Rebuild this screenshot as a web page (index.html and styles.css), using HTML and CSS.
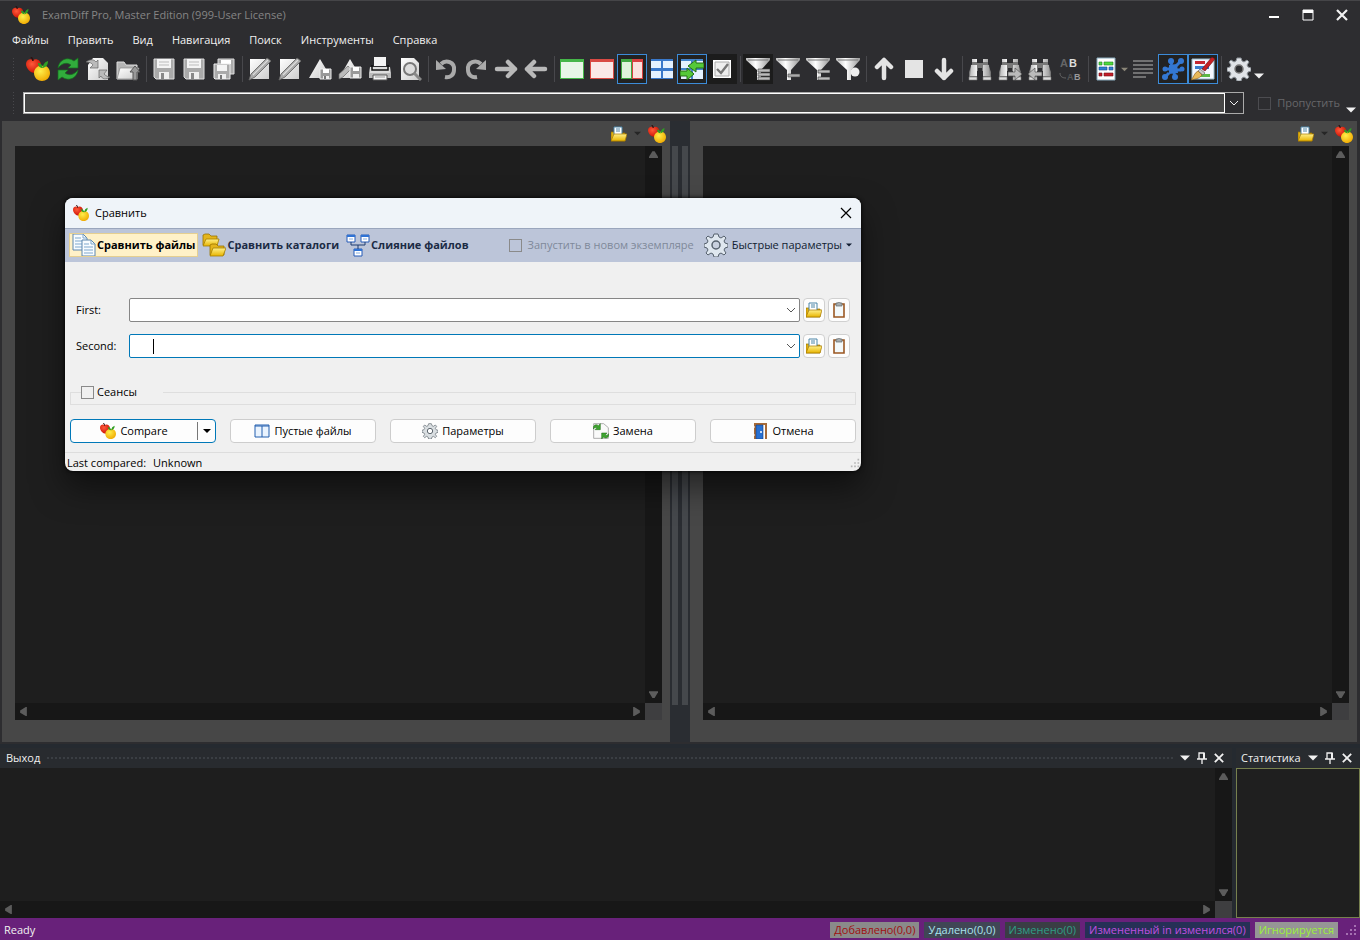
FILE: index.html
```
<!DOCTYPE html>
<html lang="ru">
  <head>
    <meta charset="utf-8" />
    <meta name="viewport" content="width=device-width, initial-scale=1" />
    <title>ExamDiff Pro</title>
    <link rel="stylesheet" href="styles.css">
  </head>
  <body>
    <!-- icon set -->
    <svg class="sprite" aria-hidden="true">
      <defs>
        <linearGradient id="silver" x1="0" x2="1"><stop offset="0" stop-color="#bbb"/><stop offset=".4" stop-color="#fff"/><stop offset="1" stop-color="#999"/></linearGradient>
        <linearGradient id="paper" x2="1" y2="1"><stop offset="0" stop-color="#fff"/><stop offset="1" stop-color="#ccc"/></linearGradient>
        <linearGradient id="gold" x2="0" y2="1"><stop offset="0" stop-color="#fff08a"/><stop offset="1" stop-color="#e8b400"/></linearGradient>
        <radialGradient id="redball" cx=".4" cy=".35" r=".7"><stop offset="0" stop-color="#ff5a3a"/><stop offset="1" stop-color="#c80c00"/></radialGradient>
        <radialGradient id="yellowball" cx=".4" cy=".35" r=".7"><stop offset="0" stop-color="#ffee4a"/><stop offset="1" stop-color="#f0a800"/></radialGradient>
      </defs>
      <symbol id="apples" viewBox="0 0 24 24">
        <path d="M7 3c3-2 8 0 8 5 0 4-3 8-6 8-5 0-9-5-9-9 0-4 4-6 7-4z" fill="url(#redball)"/>
        <path d="M7 4C7 2 6 1 5 0" stroke="#301010" stroke-width="1.5" fill="none"/>
        <path d="M16 9c5-1 8 3 8 7 0 5-4 8-8 8s-8-3-8-8c0-4 4-8 8-7z" fill="url(#yellowball)"/>
        <path d="M17 11c-1-4-3-5-5-5 0 3 2 5 5 5zM17 11c0-4 2-6 5-7 0 4-2 6-5 7z" fill="#2f9f24"/>
      </symbol>
      <symbol id="refresh" viewBox="0 0 24 24">
        <path d="M2 11C3 3 11-1 18 4l4-3v10H12l3-3C11 5 6 6 2 11zM22 13c-1 8-9 12-16 7l-4 3V13h10l-3 3c4 3 9 2 13-3z" fill="#31ad3c" stroke="#16711c" stroke-width=".7"/>
      </symbol>
      <symbol id="swap" viewBox="0 0 24 24">
        <path d="M2 8l5-7h10l5 5v17H2z" fill="url(#paper)"/>
        <path d="M0 5c4-3 8-3 10 0l2-2v8H4l3-3C6 6 3 5 0 5zM24 20c-4 3-8 2-9-1l-2 2v-8h8l-3 4c2 2 4 3 6 3z" fill="#bbb" stroke="#666" stroke-width=".7"/>
      </symbol>
      <symbol id="swap-green" viewBox="0 0 24 24">
        <path d="M1 1h15l7 6v16H1z" fill="#fafafa" stroke="#888"/>
        <path d="M0 9C0 3 5 1 8 4l3-3v9H3l3-3C4 6 2 7 0 9zM24 16c0 6-5 8-8 5l-3 3v-9h8l-3 3c2 1 4 0 6-2z" fill="#3ea52f" stroke="#206b18" stroke-width=".8"/>
      </symbol>
      <symbol id="folder-up" viewBox="0 0 24 24">
        <path d="M1 22V5h7l2 3h11v14z" fill="#b5b5b5" stroke="#ddd"/>
        <path d="M1 22l3-11h19l-3 11z" fill="url(#paper)" stroke="#888" stroke-width=".7"/>
        <path d="M17 23v-8h-3l5-6 5 6h-3v8z" fill="#999" stroke="#555"/>
      </symbol>
      <symbol id="save" viewBox="0 0 24 24">
        <path d="M2 2h20v20H4l-2-2z" fill="#aaa" stroke="#ddd"/><path d="M5 2h14v9H5z" fill="#f4f4f4"/><path d="M7 15h10v7H7z" fill="#eee"/><path d="M9 16h3v6H9z" fill="#888"/><path d="M7 5h10M7 8h10" stroke="#bbb"/>
      </symbol>
      <symbol id="save-all" viewBox="0 0 24 24">
        <path d="M6 2h16v15H6z" fill="#aaa" stroke="#ddd"/><path d="M9 3h10v4H9z" fill="#fff"/>
        <path d="M2 7h16v15H3l-1-1z" fill="#aaa" stroke="#eee"/><path d="M5 8h10v6H5z" fill="#f4f4f4"/><path d="M6 17h8v5H6z" fill="#eee"/><path d="M8 18h2v4H8z" fill="#777"/>
      </symbol>
      <symbol id="edit" viewBox="0 0 24 24">
        <path d="M2 2h19v20H2z" fill="url(#paper)"/><path d="M1 23l2-6L19 1l4 3L7 20z" fill="#aaa" stroke="#666" stroke-width=".9"/><path d="M5 18L20 3" stroke="#ddd" stroke-width="1.2"/>
      </symbol>
      <symbol id="delta-save" viewBox="0 0 24 24">
        <path d="M12 2L1 21h13V12h4z" fill="url(#paper)"/><path d="M12 12h11v10H12z" fill="#999" stroke="#eee"/><path d="M15 12h6v4h-6z" fill="#fff"/><path d="M15 19h6v3h-6z" fill="#eee"/><path d="M16 19h2v3h-2z" fill="#777"/>
      </symbol>
      <symbol id="delta-edit" viewBox="0 0 24 24">
        <path d="M12 2L1 21h13V12h4z" fill="url(#paper)"/><path d="M1 22v-5l9-8 3 3-8 8z" fill="#bbb" stroke="#666" stroke-width=".7"/><path d="M12 10h11v11H12z" fill="#999" stroke="#eee"/><path d="M15 10h6v4h-6z" fill="#fff"/><path d="M15 17h6v4h-6z" fill="#eee"/>
      </symbol>
      <symbol id="print" viewBox="0 0 24 24">
        <path d="M6 0h12v9H6z" fill="#f4f4f4"/><path d="M2 10h20l1 7H1z" fill="#ddd"/><path d="M4 8v5h16V8" fill="none" stroke="#111" stroke-width="1.5"/><path d="M1 16h22v5H1z" fill="#bbb"/><path d="M5 18h14v5H5z" fill="#f4f4f4" stroke="#555"/><path d="M7 20h10" stroke="#999"/>
      </symbol>
      <symbol id="preview" viewBox="0 0 24 24">
        <path d="M3 1h13l5 5v17H3z" fill="url(#paper)"/><circle cx="12" cy="12" r="6" fill="#ddd" stroke="#777" stroke-width="2"/><path d="M16 16l7 7" stroke="#888" stroke-width="3"/>
      </symbol>
      <symbol id="undo" viewBox="0 0 24 24">
        <path d="M7 7c5-5 14-2 13 6 0 5-4 8-9 7" fill="none" stroke="#aaa" stroke-width="4"/><path d="M2 3v10l10-1z" fill="#aaa"/>
      </symbol>
      <symbol id="arrow" viewBox="0 0 24 24">
        <path d="M3 12h18M14 5l7 7-7 7" fill="none" stroke="currentColor" stroke-width="4.5" stroke-linecap="round" stroke-linejoin="round"/>
      </symbol>
      <symbol id="win" viewBox="0 0 24 24"><path d="M0 2h24v20H0z" fill="currentColor"/><path d="M1 5h22v16H1z" fill="#fff"/><path d="M1 5h22v16H1z" fill="currentColor" opacity=".13"/></symbol>
      <symbol id="win-split" viewBox="0 0 24 24"><path d="M1 2h11v20H1z" fill="#41a743"/><path d="M12 2h11v20H12z" fill="#d84040"/><path d="M2 5h9v16H2z" fill="#dff3dc"/><path d="M13 5h9v16h-9z" fill="#fbe0dd"/></symbol>
      <symbol id="win-grid" viewBox="0 0 24 24"><path d="M1 2h22v20H1z" fill="#3978ca"/><path d="M1 4h10v7H1zM13 4h10v7H13zM1 14h10v7H1zM13 14h10v7H13z" fill="#e5f2ff"/></symbol>
      <symbol id="win-sync" viewBox="0 0 24 24"><path d="M1 2h22v20H1z" fill="#4585cc"/><path d="M1 4h10v7H1zM13 4h10v7H13zM1 13h10v9H1zM13 13h10v9H13z" fill="#e5f2ff"/><path d="M24 6h-8V3L8 9l8 6v-4h8zM0 14h7v-3l7 6-7 6v-4H0z" fill="#55c938" stroke="#246c16"/></symbol>
      <symbol id="check" viewBox="0 0 24 24"><path d="M3 3h18v18H3z" fill="#fff"/><path d="M5 5h14v14H5z" fill="#eee" stroke="#aaa"/><path d="M7 12l4 4 7-9" stroke="#777" stroke-width="2.4" fill="none"/></symbol>
      <symbol id="funnel" viewBox="0 0 24 24"><path d="M0 1h24v2l-9 10v10h-4V13L0 3z" fill="url(#silver)"/><path d="M2 3h20" stroke="#777"/></symbol>
      <symbol id="bars-three" viewBox="0 0 24 24"><path d="M12 12h12v3H12zM12 16h12v3H12zM12 20h12v3H12z" fill="#bbb" stroke="#444" stroke-width=".6"/></symbol>
      <symbol id="binoculars" viewBox="0 0 24 24"><path d="M4 2h5v4h6V2h5v5l3 8v8h-8v-9h-1v-3h-4v3H9v9H1v-8l3-8z" fill="#777"/><path d="M4 2h5v3H4zM15 2h5v3h-5zM3 8h6v11H2zM15 8h6l1 11h-7z" fill="url(#silver)"/><path d="M1 20h8v3H1zM15 20h8v3h-8z" fill="#ddd" stroke="#777" stroke-width=".6"/></symbol>
      <symbol id="gear" viewBox="0 0 24 24">
        <path d="M10 1h4l1 3 2 1 3-2 2 2-2 3 1 2 3 1v3l-3 1-1 2 2 3-2 2-3-2-2 1-1 3h-4l-1-3-2-1-3 2-2-2 2-3-1-2-3-1v-3l3-1 1-2-2-3 2-2 3 2 2-1z" fill="var(--gear, #e0e3e7)" stroke="var(--gearline, #8d9399)"/><circle cx="12" cy="12" r="4" fill="var(--hole, #2d2d30)" stroke="var(--gearline, #777)" stroke-width="1.5"/>
      </symbol>
      <symbol id="table" viewBox="0 0 24 24"><path d="M3 1h18v22H3z" fill="#fff" stroke="#8ab"/><path d="M5 5h3v3H5zM10 5h9v3h-9z" fill="#4fdc3f" stroke="#228022" stroke-width=".6"/><path d="M5 10h8v3H5zM15 10h4v3h-4z" fill="#317ed0" stroke="#134c91" stroke-width=".6"/><path d="M5 16h3v3H5zM10 16h9v3h-9z" fill="#c51d29" stroke="#701018" stroke-width=".6"/></symbol>
      <symbol id="lines" viewBox="0 0 24 24"><path d="M2 4h20M2 8h20M2 12h20M2 16h20M2 20h13" stroke="#888" stroke-width="1.6"/></symbol>
      <symbol id="puzzle" viewBox="0 0 24 24"><path d="M8 8l8-1 1 9-9 1z" fill="#3377d2"/><path d="M15 9l5-5M8 16l-4 4M16 13h4M13 16l1 4M8 12H4M11 8L9 4" stroke="#3377d2" stroke-width="3"/><g fill="#3377d2"><circle cx="20" cy="4" r="3"/><circle cx="4" cy="20" r="3"/><circle cx="21" cy="12" r="2.5"/><circle cx="14" cy="20" r="3"/><circle cx="4" cy="12" r="2.5"/><circle cx="10" cy="4" r="3"/></g></symbol>
      <symbol id="paint" viewBox="0 0 24 24"><path d="M1 2h22v20H1z" fill="#f4f7ff" stroke="#9bc"/><path d="M4 4h10v3H4z" fill="#c62731"/><path d="M4 9h14v3H4z" fill="#397bcc"/><path d="M9 17h10v3H9z" fill="#5bb846"/><path d="M11 12L21 0l3 2-10 12z" fill="#c62024" stroke="#650b10" stroke-width=".6"/><path d="M9 12l5 4-2 2-5-4z" fill="#ccc" stroke="#555" stroke-width=".6"/><path d="M7 14l4 4c-3 4-7 4-11 5 3-3 3-7 7-9z" fill="#e9b95a" stroke="#835615" stroke-width=".6"/></symbol>
      <symbol id="open" viewBox="0 0 16 16"><path d="M0 15V6h3l1 1h10v8z" fill="#e2b010" stroke="#9b7500" stroke-width=".7"/><path d="M3 1h8v9H3z" fill="#fff" stroke="#4c86a8"/><path d="M5 3h4M5 5h4" stroke="#4c86a8"/><path d="M0 15l3-7h13l-2 7z" fill="url(#gold)" stroke="#a77900" stroke-width=".7"/></symbol>
      <symbol id="clipboard" viewBox="0 0 16 16"><path d="M3 2h10v13H3z" fill="#f3f9fb" stroke="#9a5722" stroke-width="1.6"/><path d="M5 1h2c0-2 2-2 2 0h2v3H5z" fill="#a7adb0" stroke="#626769" stroke-width=".7"/></symbol>
      <symbol id="pages" viewBox="0 0 24 24"><path d="M1 1h10l4 4v12H1z" fill="#f8fcff" stroke="#5c86ae"/><path d="M11 1v4h4M3 5h6M3 8h9M3 11h7M3 14h7" stroke="#7fa7cd" fill="none"/><path d="M10 7h9l4 4v12H10z" fill="#f8fcff" stroke="#5c86ae"/><path d="M19 7v4h4M12 11h5M12 14h9M12 17h9M12 20h9" stroke="#7fa7cd" fill="none"/></symbol>
      <symbol id="folders" viewBox="0 0 24 24"><path d="M1 12V2l2-1h4l2 2h6v9z" fill="#e4b51c" stroke="#9a7300" stroke-width=".8"/><path d="M1 13l3-7h13l-2 7z" fill="url(#gold)" stroke="#a67d00" stroke-width=".8"/><path d="M8 22V12l2-1h4l2 2h6v9z" fill="#e4b51c" stroke="#9a7300" stroke-width=".8"/><path d="M8 23l3-8h13l-3 8z" fill="url(#gold)" stroke="#a67d00" stroke-width=".8"/></symbol>
      <symbol id="merge" viewBox="0 0 24 24"><path d="M1 2h8v7H1zM15 2h8v7h-8zM8 16h8v7H8z" fill="#fff" stroke="#245bb7"/><path d="M1 3h8M15 3h8M8 17h8" stroke="#2f73d5" stroke-width="2"/><path d="M3 6h4M17 6h4M10 20h4" stroke="#89afe0"/><path d="M5 9v3h14V9M12 12v4" fill="none" stroke="#1f3d70"/></symbol>
      <symbol id="blank" viewBox="0 0 16 16"><path d="M1 2h14v12H1z" fill="#e9f3fe" stroke="#235fae"/><path d="M1 3h14M8 3v11" stroke="#235fae"/></symbol>
      <symbol id="door" viewBox="0 0 16 16"><path d="M2 16V0h13v16h-2V2H4v14z" fill="#a66a38"/><path d="M4 2h7v14H4z" fill="#2870d1" stroke="#163e80" stroke-width=".6"/><path d="M2 4h1M2 12h1" stroke="#fff"/><circle cx="9" cy="9" r="1" fill="#fff"/></symbol>
      <symbol id="caret" viewBox="0 0 8 8"><path d="M0 2h8L4 6z" fill="currentColor"/></symbol>
      <symbol id="arrowhead" viewBox="0 0 8 8"><path d="M0 1h8v1L5 7H3L0 2z" fill="currentColor"/></symbol>
      <symbol id="chevron" viewBox="0 0 10 10"><path d="M1 3l4 4 4-4" fill="none" stroke="currentColor"/></symbol>
      <symbol id="cross" viewBox="0 0 12 12"><path d="M1 1l10 10M11 1L1 11" stroke="currentColor" stroke-width="var(--w, 1.2)"/></symbol>
      <symbol id="pin" viewBox="0 0 12 12"><path d="M3 7V1h5v6M1 7h10M6 7v5" fill="none" stroke="currentColor" stroke-width="1.3"/><path d="M7 1h2v6H7z" fill="currentColor"/></symbol>
      <symbol id="grip" viewBox="0 0 12 12"><path d="M9 1h2v2H9zM5 5h2v2H5zM9 5h2v2H9zM1 9h2v2H1zM5 9h2v2H5zM9 9h2v2H9z" fill="currentColor"/></symbol>
    </svg>

    <header class="titlebar">
      <svg class="i18"><use href="#apples"/></svg>
      <span class="app-name">ExamDiff Pro, Master Edition (999-User License)</span>
      <button class="win-btn" aria-label="Свернуть"><svg class="i12" viewBox="0 0 12 12"><path d="M1 7h10v2H1z" fill="#fff"/></svg></button>
      <button class="win-btn" aria-label="Развернуть"><svg class="i12" viewBox="0 0 12 12"><path d="M1 1h10v10H1z" fill="none" stroke="#fff"/><path d="M1 1h10v3H1z" fill="#fff"/></svg></button>
      <button class="win-btn thick" aria-label="Закрыть"><svg class="i12"><use href="#cross"/></svg></button>
    </header>

    <nav class="menu">
      <a href="#">Файлы</a><a href="#">Править</a><a href="#">Вид</a><a href="#">Навигация</a><a href="#">Поиск</a><a href="#">Инструменты</a><a href="#">Справка</a>
    </nav>

    <div class="toolbar">
      <span class="handle"></span>
      <button aria-label="Сравнить"><svg><use href="#apples"/></svg></button>
      <button aria-label="Обновить"><svg><use href="#refresh"/></svg></button>
      <button aria-label="Замена"><svg><use href="#swap"/></svg></button>
      <button aria-label="Каталог вверх"><svg><use href="#folder-up"/></svg></button>
      <span class="sep"></span>
      <button aria-label="Сохранить первый"><svg><use href="#save"/></svg></button>
      <button aria-label="Сохранить второй"><svg><use href="#save"/></svg></button>
      <button aria-label="Сохранить все"><svg><use href="#save-all"/></svg></button>
      <span class="sep"></span>
      <button aria-label="Править первый"><svg><use href="#edit"/></svg></button>
      <button aria-label="Править второй"><svg><use href="#edit"/></svg></button>
      <button aria-label="Сохранить разницу"><svg><use href="#delta-save"/></svg></button>
      <button aria-label="Сохранить разницу как"><svg><use href="#delta-edit"/></svg></button>
      <button aria-label="Печать"><svg><use href="#print"/></svg></button>
      <button aria-label="Просмотр"><svg><use href="#preview"/></svg></button>
      <span class="sep"></span>
      <button aria-label="Отменить"><svg><use href="#undo"/></svg></button>
      <button aria-label="Повторить"><svg class="mirror"><use href="#undo"/></svg></button>
      <button class="soft" aria-label="Вправо"><svg><use href="#arrow"/></svg></button>
      <button class="soft" aria-label="Влево"><svg class="mirror"><use href="#arrow"/></svg></button>
      <span class="sep"></span>
      <button class="green" aria-label="Первая панель"><svg><use href="#win"/></svg></button>
      <button class="red" aria-label="Вторая панель"><svg><use href="#win"/></svg></button>
      <button class="on" aria-label="Две панели"><svg><use href="#win-split"/></svg></button>
      <button aria-label="Расположение"><svg><use href="#win-grid"/></svg></button>
      <button class="on" aria-label="Синхронная прокрутка"><svg><use href="#win-sync"/></svg></button>
      <button class="dark" aria-label="Флажки"><svg><use href="#check"/></svg></button>
      <span class="sep"></span>
      <button class="dark" aria-label="Показать все"><svg viewBox="0 0 24 24"><use href="#funnel"/><use href="#bars-three"/></svg></button>
      <button aria-label="Показать различия"><svg viewBox="0 0 24 24"><use href="#funnel"/><path d="M12 17h12v3H12z" fill="#aaa" stroke="#444" stroke-width=".6"/></svg></button>
      <button aria-label="Показать совпадения"><svg viewBox="0 0 24 24"><use href="#funnel"/><path d="M12 13h12v3H12zM12 20h12v3H12z" fill="#bbb" stroke="#333" stroke-width=".6"/></svg></button>
      <button aria-label="Фильтр"><svg viewBox="0 0 24 24"><use href="#funnel"/><circle cx="19" cy="15" r="4.5" fill="#eee"/></svg></button>
      <span class="sep"></span>
      <button class="light" aria-label="Предыдущее"><svg class="up"><use href="#arrow"/></svg></button>
      <button aria-label="Текущее"><svg viewBox="0 0 24 24"><path d="M3 3h18v18H3z" fill="#e4e4e4"/></svg></button>
      <button class="light" aria-label="Следующее"><svg class="down"><use href="#arrow"/></svg></button>
      <span class="sep"></span>
      <button aria-label="Найти"><svg><use href="#binoculars"/></svg></button>
      <button aria-label="Найти далее"><svg viewBox="0 0 24 24"><use href="#binoculars"/><path d="M10 15h7v-4l7 6-7 6v-4h-7z" fill="#bbb" stroke="#555" stroke-width=".7"/></svg></button>
      <button aria-label="Найти ранее"><svg viewBox="0 0 24 24"><use href="#binoculars"/><path d="M14 15H7v-4l-7 6 7 6v-4h7z" fill="#bbb" stroke="#555" stroke-width=".7"/></svg></button>
      <button aria-label="Заменить"><svg class="ab" viewBox="0 0 24 24"><text x="2" y="10" fill="#666">A</text><text x="11" y="10" fill="#ddd">B</text><text class="small" x="9" y="23" fill="#555">A</text><text class="small" x="16" y="23" fill="#999">B</text><path d="M2 16c0 4 3 5 6 5" stroke="#666" fill="none"/></svg></button>
      <span class="sep"></span>
      <button aria-label="Вид таблицы"><svg><use href="#table"/></svg></button>
      <svg class="i7"><use href="#caret"/></svg>
      <button aria-label="Перенос строк"><svg><use href="#lines"/></svg></button>
      <button class="on" aria-label="Плагины"><svg><use href="#puzzle"/></svg></button>
      <button class="on" aria-label="Подсветка"><svg><use href="#paint"/></svg></button>
      <span class="sep"></span>
      <button aria-label="Параметры"><svg><use href="#gear"/></svg></button>
      <svg class="i10 overflow"><use href="#caret"/></svg>
    </div>

    <div class="pathbar">
      <span class="handle"></span>
      <div class="path-combo">
        <input type="text" aria-label="Различие">
        <button aria-label="Список"><svg class="i10"><use href="#chevron"/></svg></button>
      </div>
      <label class="skip"><input type="checkbox" disabled>Пропустить</label>
      <svg class="i10 overflow"><use href="#caret"/></svg>
    </div>

    <main class="compare">
      <section class="pane">
        <div class="pane-head">
          <button aria-label="Открыть"><svg class="i16"><use href="#open"/></svg></button>
          <svg class="i7"><use href="#caret"/></svg>
          <button aria-label="Сравнить"><svg class="i18"><use href="#apples"/></svg></button>
        </div>
        <div class="editor">
          <div class="text-area"></div>
          <div class="vbar"><svg class="up tri"><use href="#arrowhead"/></svg><svg class="tri"><use href="#arrowhead"/></svg></div>
          <div class="hbar"><svg class="left tri"><use href="#arrowhead"/></svg><svg class="right tri"><use href="#arrowhead"/></svg></div>
        </div>
      </section>
      <div class="splitter"><span></span><span></span></div>
      <section class="pane">
        <div class="pane-head">
          <button aria-label="Открыть"><svg class="i16"><use href="#open"/></svg></button>
          <svg class="i7"><use href="#caret"/></svg>
          <button aria-label="Сравнить"><svg class="i18"><use href="#apples"/></svg></button>
        </div>
        <div class="editor">
          <div class="text-area"></div>
          <div class="vbar"><svg class="up tri"><use href="#arrowhead"/></svg><svg class="tri"><use href="#arrowhead"/></svg></div>
          <div class="hbar"><svg class="left tri"><use href="#arrowhead"/></svg><svg class="right tri"><use href="#arrowhead"/></svg></div>
        </div>
      </section>
    </main>

    <div class="docks">
      <section class="dock output">
        <div class="dock-head">
          <span>Выход</span><span class="dots"></span>
          <button aria-label="Меню"><svg class="i10"><use href="#caret"/></svg></button>
          <button aria-label="Закрепить"><svg class="i12"><use href="#pin"/></svg></button>
          <button class="thick" aria-label="Закрыть"><svg class="i10"><use href="#cross"/></svg></button>
        </div>
        <div class="editor">
          <div class="text-area"></div>
          <div class="vbar"><svg class="up tri"><use href="#arrowhead"/></svg><svg class="tri"><use href="#arrowhead"/></svg></div>
          <div class="hbar"><svg class="left tri"><use href="#arrowhead"/></svg><svg class="right tri"><use href="#arrowhead"/></svg></div>
        </div>
      </section>
      <section class="dock stats">
        <div class="dock-head">
          <span class="fill">Статистика</span>
          <button aria-label="Меню"><svg class="i10"><use href="#caret"/></svg></button>
          <button aria-label="Закрепить"><svg class="i12"><use href="#pin"/></svg></button>
          <button class="thick" aria-label="Закрыть"><svg class="i10"><use href="#cross"/></svg></button>
        </div>
        <div class="stats-body"></div>
      </section>
    </div>

    <footer class="statusbar">
      <span class="ready">Ready</span>
      <span class="tag added">Добавлено(0,0)</span>
      <span class="tag deleted">Удалено(0,0)</span>
      <span class="tag changed">Изменено(0)</span>
      <span class="tag inner">Измененный in изменился(0)</span>
      <span class="tag ignored">Игнорируется</span>
      <svg class="i12"><use href="#grip"/></svg>
    </footer>

    <div class="dialog" role="dialog" aria-labelledby="dialog-title">
      <div class="dialog-title">
        <svg class="i16"><use href="#apples"/></svg>
        <span id="dialog-title">Сравнить</span>
        <button aria-label="Закрыть"><svg class="i12"><use href="#cross"/></svg></button>
      </div>
      <div class="dialog-tabs">
        <button class="tab current"><svg class="i24"><use href="#pages"/></svg>Сравнить файлы</button>
        <button class="tab"><svg class="i24"><use href="#folders"/></svg>Сравнить каталоги</button>
        <button class="tab"><svg class="i24"><use href="#merge"/></svg>Слияние файлов</button>
        <label class="new-instance"><input type="checkbox" disabled>Запустить в новом экземпляре</label>
        <button class="quick"><svg class="i24"><use href="#gear"/></svg>Быстрые параметры<svg class="i6"><use href="#caret"/></svg></button>
      </div>
      <div class="dialog-body">
        <div class="field">
          <label for="first">First:</label>
          <div class="combo"><input type="text" id="first"><button aria-label="Список"><svg class="i10"><use href="#chevron"/></svg></button></div>
          <button class="small-btn" aria-label="Открыть"><svg class="i16"><use href="#open"/></svg></button>
          <button class="small-btn" aria-label="Вставить"><svg class="i16"><use href="#clipboard"/></svg></button>
        </div>
        <div class="field">
          <label for="second">Second:</label>
          <div class="combo focused"><input type="text" id="second"><span class="text-cursor"></span><button aria-label="Список"><svg class="i10"><use href="#chevron"/></svg></button></div>
          <button class="small-btn" aria-label="Открыть"><svg class="i16"><use href="#open"/></svg></button>
          <button class="small-btn" aria-label="Вставить"><svg class="i16"><use href="#clipboard"/></svg></button>
        </div>
        <fieldset class="sessions">
          <legend><label><input type="checkbox">Сеансы</label></legend>
        </fieldset>
        <div class="actions">
          <div class="split-btn">
            <button><svg class="i16"><use href="#apples"/></svg>Compare</button>
            <button class="more" aria-label="Ещё"><svg class="i8"><use href="#caret"/></svg></button>
          </div>
          <button><svg class="i16"><use href="#blank"/></svg>Пустые файлы</button>
          <button><svg class="i16"><use href="#gear"/></svg>Параметры</button>
          <button><svg class="i16"><use href="#swap-green"/></svg>Замена</button>
          <button><svg class="i16"><use href="#door"/></svg>Отмена</button>
        </div>
      </div>
      <div class="dialog-status"><span>Last compared:</span><span>Unknown</span><svg class="i10"><use href="#grip"/></svg></div>
    </div>
  </body>
</html>
```

FILE: styles.css
```
* {
  box-sizing: border-box;
}

body {
  margin: 0;
  height: 100vh;
  overflow: hidden;
  display: flex;
  flex-direction: column;
  position: relative;
  background: #2d2d30;
  border-top: 1px solid #454548;
  color: #f1f1f1;
  font: 11px/16px "Open Sans", "Noto Sans", sans-serif;
}

button,
input {
  font: inherit;
  color: inherit;
}

button {
  display: flex;
  align-items: center;
  justify-content: center;
  padding: 0;
  border: 0;
  background: none;
  white-space: nowrap;
}

svg {
  flex: none;
}

input[type="checkbox"] {
  appearance: none;
  flex: none;
  width: 13px;
  height: 13px;
  margin: 0;
  border: 1px solid #8a8a8a;
}

.sprite {
  position: absolute;
  width: 0;
  height: 0;
}

.i6 { width: 6px; height: 6px; }
.i7 { width: 7px; height: 7px; }
.i8 { width: 8px; height: 8px; }
.i10 { width: 10px; height: 10px; }
.i12 { width: 12px; height: 12px; }
.i16 { width: 16px; height: 16px; }
.i18 { width: 18px; height: 18px; }
.i24 { width: 24px; height: 24px; }

.mirror { transform: scaleX(-1); }
.up { transform: rotate(-90deg); }
.down { transform: rotate(90deg); }
.thick { --w: 2.2; }

/* title and menu */
.titlebar {
  flex: none;
  display: flex;
  align-items: center;
  height: 27px;
  padding: 0 8px 0 12px;
}

.app-name {
  flex: 1;
  margin-left: 12px;
  color: #858585;
}

.win-btn {
  width: 20px;
  height: 20px;
  margin-left: 14px;
}

.menu {
  flex: none;
  display: flex;
  gap: 19px;
  height: 24px;
  padding: 4px 12px;
}

.menu a {
  color: #f1f1f1;
  text-decoration: none;
  white-space: nowrap;
}

/* toolbars */
.toolbar {
  flex: none;
  display: flex;
  align-items: center;
  height: 34px;
}

.handle {
  flex: none;
  width: 4px;
  height: 24px;
  margin: 0 7px 0 12px;
  background: radial-gradient(#48484c 1px, transparent 1px) 0 0 / 3px 3px;
}

.toolbar button {
  flex: none;
  width: 30px;
  height: 30px;
}

.toolbar button svg {
  width: 24px;
  height: 24px;
}

.toolbar .sep {
  flex: none;
  width: 1px;
  height: 26px;
  margin: 0 2px 0 3px;
  background: #48484c;
}

.toolbar .on {
  border: 1px solid #3c8bd8;
  background: #222;
}

.toolbar .dark { background: #1c1c1c; }
.toolbar .soft { color: #b9b9b9; }
.toolbar .light { color: #e4e4e4; }
.toolbar .green { color: #45b649; }
.toolbar .red { color: #d94a44; }
.toolbar .i7 { color: #8a8678; }

.overflow {
  align-self: flex-end;
  margin-bottom: 5px;
}

.ab text {
  font: bold 11px "Liberation Sans", sans-serif;
}

.ab .small {
  font-size: 9px;
}

.pathbar {
  flex: none;
  display: flex;
  align-items: center;
  height: 34px;
  margin-bottom: 1px;
  padding-right: 4px;
}

.path-combo {
  flex: 1;
  display: flex;
  height: 22px;
  border: 1px solid #aaa;
}

.path-combo input {
  flex: 1;
  min-width: 0;
  border: 1px solid #fff;
  margin: 0;
  background: #474747;
}

.path-combo button {
  width: 18px;
}

.skip {
  display: flex;
  align-items: center;
  gap: 6px;
  margin: 0 6px 0 14px;
  color: #67676a;
}

.skip input[type="checkbox"] {
  border-color: #4c4c50;
}

/* file panes */
.compare {
  flex: 1;
  min-height: 0;
  display: flex;
  padding: 0 3px 2px 2px;
}

.pane {
  flex: 1;
  display: flex;
  flex-direction: column;
  padding: 0 8px 22px 13px;
  background: #474747;
}

.pane-head {
  flex: none;
  display: flex;
  align-items: center;
  justify-content: flex-end;
  gap: 7px;
  height: 25px;
  margin-right: -4px;
}

.pane-head .i7 {
  color: #262626;
}

.editor {
  flex: 1;
  min-height: 0;
  display: grid;
  grid-template: 1fr 17px / 1fr 17px;
  background: #3e3e40;
}

.text-area {
  background: #1e1e1e;
}

.vbar,
.hbar {
  display: flex;
  align-items: center;
  justify-content: space-between;
  background: #171717;
  color: #5c5c5c;
}

.vbar {
  flex-direction: column;
  padding: 4px 0;
}

.hbar {
  padding: 0 4px;
}

.tri {
  width: 9px;
  height: 9px;
}

.tri.up { transform: rotate(180deg); }
.tri.left { transform: rotate(90deg); }
.tri.right { transform: rotate(-90deg); }

.splitter {
  flex: none;
  display: flex;
  justify-content: space-between;
  width: 20px;
  padding: 25px 2px 37px;
  background: #2a2d32;
}

.splitter span {
  width: 6px;
  background: #45484c;
}

/* docked panels */
.docks {
  flex: none;
  display: flex;
  gap: 4px;
  height: 174px;
  padding-top: 4px;
  background: #252a30;
}

.dock {
  display: flex;
  flex-direction: column;
  background: #202020;
}

.output {
  flex: 1;
}

.stats {
  flex: none;
  width: 124px;
}

.dock-head {
  flex: none;
  display: flex;
  align-items: center;
  gap: 6px;
  height: 20px;
  padding: 0 8px 0 6px;
  background: #282b2f;
}

.stats .dock-head {
  padding-left: 5px;
}

.fill {
  flex: 1;
}

.dots {
  flex: 1;
  height: 4px;
  background: radial-gradient(#3a3e43 1px, transparent 1px) 0 0 / 4px 4px;
}

.stats-body {
  flex: 1;
  border: 1px solid #77804e;
  background: #1f1f1f;
}

.statusbar {
  flex: none;
  display: flex;
  align-items: center;
  gap: 5px;
  height: 22px;
  padding: 2px 3px 0 4px;
  background: #68217a;
}

.statusbar svg {
  color: #a671b2;
  margin-left: 2px;
}

.ready {
  flex: 1;
}

.tag {
  padding: 0 4px;
  white-space: nowrap;
}

.added { background: #8a8a8a; color: #a01010; }
.deleted { background: #404655; color: #a8e4ee; }
.changed { background: #3a3d44; color: #2f9f86; }
.inner { background: #263056; color: #c04fe0; }
.ignored { background: #969696; color: #9cf03c; }

/* compare dialog, floats over the panes */
.dialog {
  position: absolute;
  top: 197px;
  left: 65px;
  width: 796px;
  border-radius: 8px;
  overflow: hidden;
  background: #f0f0f0;
  color: #000;
  box-shadow: 0 16px 32px rgba(0, 0, 0, .5), 0 0 4px #000;
}

.dialog-title {
  display: flex;
  align-items: center;
  gap: 6px;
  height: 30px;
  padding: 0 6px 0 8px;
  background: #eff4f9;
}

.dialog-title button {
  width: 18px;
  height: 18px;
  margin-left: auto;
}

.dialog-tabs {
  display: flex;
  align-items: center;
  height: 34px;
  padding: 0 9px 1px 4px;
  border-top: 1px solid #9aa6bd;
  background: #bcc5d9;
  white-space: nowrap;
  --gear: #dfe7ef;
  --gearline: #56616d;
  --hole: #c8d0de;
}

.tab {
  gap: 1px;
  height: 24px;
  margin-right: 1px;
  padding: 0 3px;
  color: #1b2b45;
  font-weight: bold;
}

.tab.current {
  background: #fff1c8;
  outline: 1px solid #e5cf91;
  outline-offset: -1px;
  color: #000;
}

.new-instance {
  display: flex;
  align-items: center;
  gap: 6px;
  margin-left: auto;
  color: #7f8999;
}

.quick {
  gap: 4px;
  margin-left: 10px;
  color: #101c30;
}

.dialog-body {
  padding: 36px 5px 9px;
}

.field {
  display: flex;
  align-items: center;
  gap: 3px;
  margin: 0 6px 12px;
}

.field label {
  width: 50px;
}

.combo {
  position: relative;
  flex: 1;
  display: flex;
  height: 24px;
  border: 1px solid #868686;
  border-radius: 2px;
  background: #fff;
}

.combo.focused {
  border-color: #0078b8;
}

.combo input {
  flex: 1;
  min-width: 0;
  border: 0;
  background: none;
}

.combo button {
  width: 17px;
  color: #555;
}

.text-cursor {
  position: absolute;
  top: 4px;
  left: 23px;
  width: 1px;
  height: 15px;
  background: #000;
}

.small-btn {
  width: 22px;
  height: 24px;
  border: 1px solid #d0d0d0;
  border-radius: 4px;
  background: #fdfdfd;
}

.sessions {
  height: 21px;
  margin: 26px 0 14px;
  padding: 0;
  border: 1px solid #dedede;
}

.sessions legend {
  margin-left: 10px;
  padding: 0 26px 0 0;
}

.sessions label {
  display: flex;
  align-items: center;
  gap: 3px;
}

.actions {
  display: grid;
  grid-template-columns: repeat(5, 1fr);
  gap: 14px;
  --gear: #d9dee1;
  --gearline: #5f6870;
  --hole: #fff;
}

.actions > * {
  height: 24px;
  border: 1px solid #cdcdcd;
  border-radius: 4px;
  background: #fdfdfd;
}

.actions button {
  gap: 4px;
}

.actions .split-btn {
  display: flex;
  border-color: #0078b8;
}

.split-btn button {
  flex: 1;
}

.split-btn .more {
  flex: none;
  width: 18px;
  height: 18px;
  margin-top: 2px;
  border-left: 1px solid #777;
}

.dialog-status {
  display: flex;
  align-items: center;
  gap: 7px;
  height: 19px;
  padding: 2px 1px 0 2px;
  border-top: 1px solid #ddd;
}

.dialog-status svg {
  margin-left: auto;
  color: #b5b5b5;
}
```
